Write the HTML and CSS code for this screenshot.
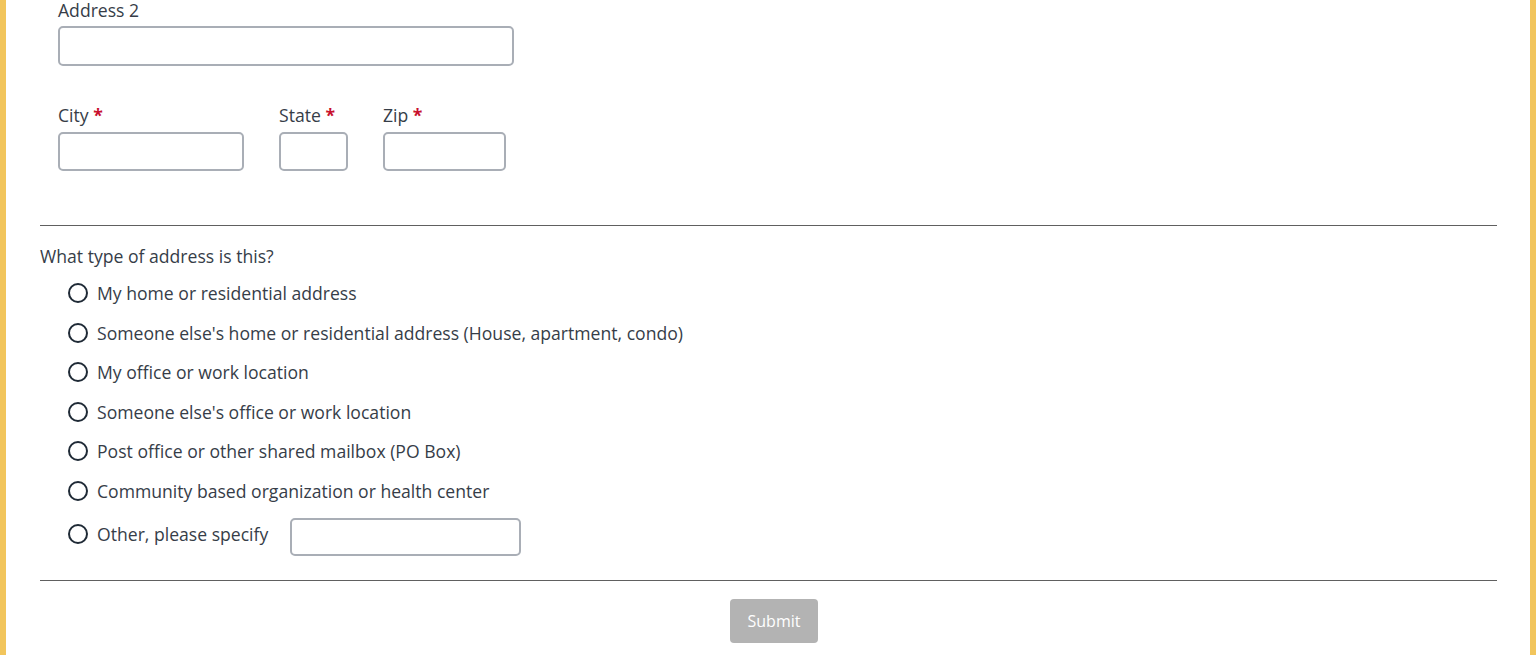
FILE: index.html
```html
<!DOCTYPE html>
<html lang="en">
<head>
  <meta charset="UTF-8" />
  <meta name="viewport" content="width=device-width, initial-scale=1.0"/>
  <title>Mailing Address</title>
  <link rel="stylesheet" href="styles.css">
</head>
<body>

<div class="page">
  <form class="address-form">
    <!-- Street details -->
    <div class="field-group">
      <div class="field">
        <label for="address2">Address 2</label>
        <input type="text" id="address2" class="input input-wide" />
      </div>

      <div class="field-row">
        <div class="field">
          <label for="city">City <span class="req">*</span></label>
          <input type="text" id="city" class="input input-city" />
        </div>
        <div class="field">
          <label for="state">State <span class="req">*</span></label>
          <input type="text" id="state" class="input input-state" />
        </div>
        <div class="field">
          <label for="zip">Zip <span class="req">*</span></label>
          <input type="text" id="zip" class="input input-zip" />
        </div>
      </div>
    </div>

    <hr class="divider divider-top" />

    <!-- Address type -->
    <fieldset class="question">
      <legend>What type of address is this?</legend>
      <div class="options">
        <label class="option"><input type="radio" name="type" value="home" /> My home or residential address</label>
        <label class="option"><input type="radio" name="type" value="other-home" /> Someone else's home or residential address (House, apartment, condo)</label>
        <label class="option"><input type="radio" name="type" value="office" /> My office or work location</label>
        <label class="option"><input type="radio" name="type" value="other-office" /> Someone else's office or work location</label>
        <label class="option"><input type="radio" name="type" value="po" /> Post office or other shared mailbox (PO Box)</label>
        <label class="option"><input type="radio" name="type" value="cbo" /> Community based organization or health center</label>
        <div class="option-other">
          <label class="option"><input type="radio" name="type" value="other" /> Other, please specify</label>
          <input type="text" class="input input-other" aria-label="Other address type" />
        </div>
      </div>
    </fieldset>

    <hr class="divider divider-bottom" />

    <div class="actions">
      <button type="submit" class="submit-btn" disabled>Submit</button>
    </div>
  </form>
</div>

</body>
</html>
```

FILE: styles.css
```css
* {
  box-sizing: border-box;
}

body {
  margin: 0;
  font-family: "Open Sans", Arial, sans-serif;
  font-size: 17.6px;
  line-height: 24px;
  color: #363d48;
  background: #fff;
  overflow: hidden;
}

.page {
  margin-top: -2px;
  min-height: 660px;
  border-left: 6px solid #f2c55c;
  border-right: 6px solid #f2c55c;
  padding: 0 33px 0 34px;
}

.field-group {
  padding-left: 18px;
}

.field label {
  display: block;
}

.req {
  color: #c8102e;
  font-weight: bold;
}

.input {
  display: block;
  height: 40px;
  margin-top: 4px;
  padding: 6px 10px;
  border: 2px solid #a9aeb6;
  border-radius: 5px;
  font: inherit;
  background: #fff;
}

.input-wide {
  width: 456px;
}

.field-row {
  display: flex;
  gap: 35px;
  margin-top: 37px;
}

.field-row .input {
  height: 39px;
  margin-top: 5px;
}

.input-city {
  width: 186px;
}

.input-state {
  width: 69px;
}

.input-zip {
  width: 123px;
}

.divider {
  border: 0;
  border-top: 1px solid #606060;
  margin: 0;
}

.divider-top {
  margin-top: 54px;
}

.question {
  border: 0;
  margin: 0;
  padding: 18px 0 0;
}

.question legend {
  padding: 0;
  float: left;
  width: 100%;
}

.options {
  clear: both;
  display: flex;
  flex-direction: column;
  gap: 15.6px;
  padding: 13px 0 0 28px;
}

.option {
  display: flex;
  align-items: center;
  gap: 9px;
}

.option input[type="radio"] {
  appearance: none;
  -webkit-appearance: none;
  width: 20px;
  height: 20px;
  margin: 0;
  border: 2px solid #1f2a36;
  border-radius: 50%;
  background: #fff;
}

.option-other {
  display: flex;
  align-items: flex-start;
  gap: 22px;
  margin-top: -0.6px;
}

.option-other .option {
  padding-top: 4px;
}

.input-other {
  width: 231px;
  height: 38px;
  margin-top: 0;
}

.divider-bottom {
  margin-top: 24px;
}

.actions {
  display: flex;
  padding: 18px 0 0 690px;
}

.submit-btn {
  width: 88px;
  height: 44px;
  border: 0;
  border-radius: 4px;
  background: #b3b3b3;
  color: #fff;
  font: inherit;
  font-size: 16px;
}
```
